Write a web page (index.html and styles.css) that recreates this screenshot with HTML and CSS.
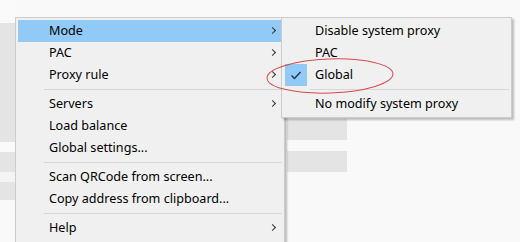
FILE: index.html
```html
<!DOCTYPE html>
<html lang="en">
<head>
    <meta charset="UTF-8">
    <title>Tray menu</title>
    <link rel="stylesheet" href="styles.css">
</head>
<body>
    <div class="screen">
        <div class="backdrop">
            <div class="side">
                <div class="strip light" style="height: 23px"></div>
                <div class="strip grey" style="height: 119px"></div>
                <div class="strip light" style="height: 10px"></div>
                <div class="strip grey" style="height: 20px"></div>
                <div class="strip pale" style="height: 10px"></div>
                <div class="strip grey" style="height: 18px"></div>
            </div>
            <div class="panel">
                <div class="row"></div>
                <div class="row"></div>
            </div>
        </div>

        <ul class="menu main-menu">
            <li class="item active">Mode<span class="arrow"></span></li>
            <li class="item">PAC<span class="arrow"></span></li>
            <li class="item">Proxy rule<span class="arrow"></span></li>
            <li class="sep"></li>
            <li class="item">Servers<span class="arrow"></span></li>
            <li class="item">Load balance</li>
            <li class="item">Global settings...</li>
            <li class="sep"></li>
            <li class="item">Scan QRCode from screen...</li>
            <li class="item">Copy address from clipboard...</li>
            <li class="sep"></li>
            <li class="item">Help<span class="arrow"></span></li>
        </ul>

        <ul class="menu sub-menu">
            <li class="item">Disable system proxy</li>
            <li class="item">PAC</li>
            <li class="item checked">
                <span class="check">
                    <svg width="22" height="22" viewBox="0 0 22 22"><path d="M6.5 11.5 L9.5 14.5 L15.5 8" fill="none" stroke="#1e3550" stroke-width="1.4"/></svg>
                </span>Global
            </li>
            <li class="sep"></li>
            <li class="item">No modify system proxy</li>
        </ul>

        <svg class="circle" width="140" height="46" viewBox="0 0 140 46">
            <ellipse cx="69" cy="22" rx="63" ry="17" fill="none" stroke="#d9484e" stroke-width="1" transform="rotate(-2 69 22)"/>
        </svg>
    </div>
</body>
</html>
```

FILE: styles.css
```css
body {
    margin: 0;
    font-family: "Noto Sans", "Open Sans", sans-serif;
    font-size: 12.6px;
    color: #000;
}
.screen {
    position: relative;
    width: 520px;
    height: 242px;
    overflow: hidden;
    background-color: #f9f9f9;
}
.backdrop {
    display: flex;
    height: 100%;
}
.side {
    width: 15px;
    display: flex;
    flex-direction: column;
}
.strip.light {
    background-color: #fafafa;
}
.strip.grey {
    background-color: #e4e4e4;
}
.strip.pale {
    background-color: #f4f4f4;
}
.panel {
    display: flex;
    flex-direction: column;
    gap: 11px;
    padding: 119px 0 0 272px;
}
.row {
    width: 60px;
    height: 21px;
    background-color: #e4e4e4;
}
.menu {
    position: absolute;
    list-style: none;
    margin: 0;
    padding: 2px;
    background-color: #f0f0f0;
    border: 1px solid #cccccc;
    box-shadow: 2px 2px 2px rgba(0, 0, 0, 0.25);
}
.main-menu {
    left: 15px;
    top: 17px;
    width: 264px;
    height: 260px;
}
.sub-menu {
    left: 281px;
    top: 17px;
    width: 225px;
}
.item {
    position: relative;
    height: 22px;
    line-height: 22px;
    padding-left: 31px;
    white-space: nowrap;
}
.item.active {
    background-color: #91c9f7;
}
.arrow {
    position: absolute;
    right: 7px;
    top: 8px;
    width: 4px;
    height: 4px;
    border-top: 1px solid #333;
    border-right: 1px solid #333;
    transform: rotate(45deg);
}
.sep {
    height: 7px;
    margin-left: 26px;
    background: linear-gradient(#d7d7d7, #d7d7d7) no-repeat 0 3px / 100% 1px;
}
.check {
    position: absolute;
    left: 1px;
    top: 0;
    width: 22px;
    height: 22px;
    background-color: #91c9f7;
}
.check svg {
    display: block;
}
.circle {
    position: absolute;
    left: 261px;
    top: 54px;
}
```
